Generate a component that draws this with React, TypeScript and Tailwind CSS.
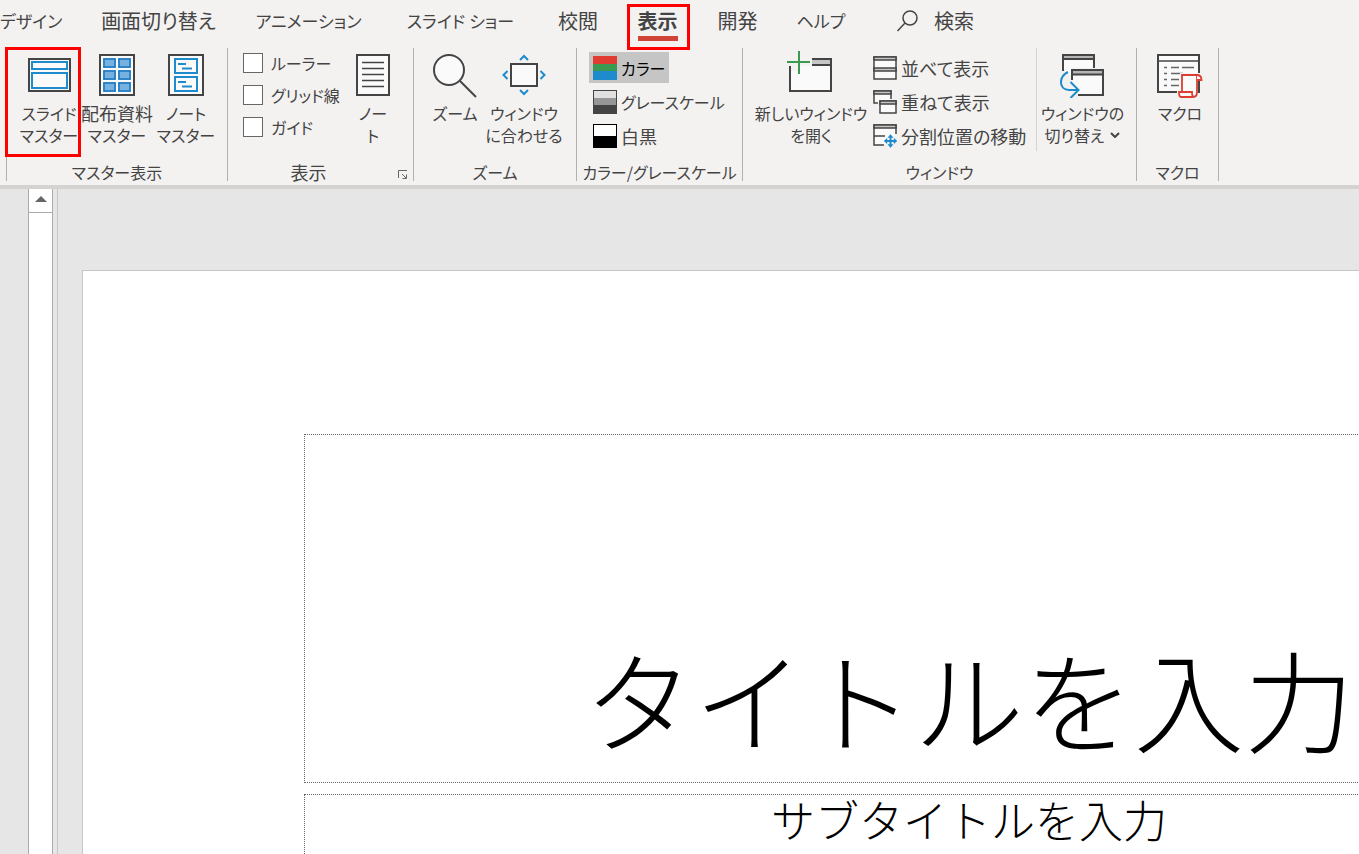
import React from "react";

const INK = "#444444";
const BLUE = "#1e8bcd";

// Kana-heavy captions are set a step smaller than kanji ones.
function captionSize(text: string) {
  const kana = text.match(/[\u3040-\u30ff]/g)?.length ?? 0;
  return kana / text.length >= 0.5 ? "text-base" : "text-lg";
}

function Tab({ className, kana, children }: { className: string; kana?: boolean; children: React.ReactNode }) {
  return (
    <button
      type="button"
      role="tab"
      className={`flex h-[42px] shrink-0 items-center whitespace-nowrap ${kana ? "text-[17px]" : "text-xl"} ${className}`}
    >
      {children}
    </button>
  );
}

function Group({ label, className, children, launcher }: { label: string; className: string; children: React.ReactNode; launcher?: boolean }) {
  return (
    <section aria-label={label} className={`flex shrink-0 flex-col justify-between border-r border-[#b1b1b1] ${className}`}>
      <div className="flex">{children}</div>
      <div className={`relative flex h-[18px] items-center justify-center whitespace-nowrap ${launcher ? "pr-6" : ""}`}>
        <span className={`${captionSize(label)} leading-4`}>{label}</span>
        {launcher && (
          <button type="button" aria-label="表示の設定" className="absolute right-1 bottom-0">
            <svg width="12" height="12" viewBox="0 0 12 12" fill="none" stroke="#666">
              <path d="M1.500 9V1.500H10M5 5l4 4M9.500 5.500V9.500H5.500" />
            </svg>
          </button>
        )}
      </div>
    </section>
  );
}

function BigButton({ icon, lines, className, menu }: { icon: React.ReactNode; lines: string[]; className: string; menu?: boolean }) {
  return (
    <button type="button" className={`flex shrink-0 flex-col items-center whitespace-nowrap ${className}`}>
      <span className="flex h-[54px] items-center">{icon}</span>
      {lines.map((line, i) => (
        <span key={line} className={`flex h-[22px] items-center gap-1.5 ${captionSize(line)}`}>
          <span className="leading-[22px]">{line}</span>
          {menu && i === lines.length - 1 && (
            <svg width="10" height="6" viewBox="0 0 10 6" fill="none" stroke={INK} strokeWidth="2">
              <path d="M1 1l4 4 4-4" />
            </svg>
          )}
        </span>
      ))}
    </button>
  );
}

function SmallButton({ icon, label, active }: { icon: React.ReactNode; label: string; active?: boolean }) {
  return (
    <button
      type="button"
      aria-pressed={active}
      className={`flex h-[31px] w-max items-center gap-1 whitespace-nowrap px-1 ${captionSize(label)} ${active ? "bg-[#c5c5c5] text-black" : ""}`}
    >
      {icon}
      {label}
    </button>
  );
}

function Check({ label }: { label: string }) {
  return (
    <label className="flex h-5 items-center gap-2 text-base whitespace-nowrap">
      <input type="checkbox" className="size-5 shrink-0 appearance-none border border-[#666] bg-white" />
      {label}
    </label>
  );
}

const SlideMasterIcon = () => (
  <svg width="44" height="44" viewBox="0 0 44 44" fill="#fafafa">
    <path d="M2 6h41v32H2z" stroke={INK} strokeWidth="2" />
    <path d="M5 9h35v7H5zM5 20h35v15H5z" stroke={BLUE} strokeWidth="2" />
  </svg>
);

const HandoutIcon = () => (
  <svg width="36" height="44" viewBox="0 0 36 44" fill="#fafafa">
    <path d="M1 2h34v40H1z" stroke={INK} strokeWidth="2" />
    <path d="M4 5h13v10H4zM19 5h13v10H19zM4 17h13v10H4zM19 17h13v10H19zM4 29h13v10H4zM19 29h13v10H19z" fill="#77b1e0" />
    <path d="M5 6h11v8H5zM20 6h11v8H20zM5 18h11v8H5zM20 18h11v8H20zM5 30h11v8H5zM20 30h11v8H20z" fill="#77b1e0" stroke="#1a76c0" strokeWidth="1.500" />
  </svg>
);

const NotesMasterIcon = () => (
  <svg width="36" height="44" viewBox="0 0 36 44" fill="#fafafa">
    <path d="M1 2h34v40H1z" stroke={INK} strokeWidth="2" />
    <path d="M7 6h22v14H7zM7 24h22v14H7zM10 11h8M14 15.500h10M10 29h8M14 33.500h10" stroke={BLUE} strokeWidth="2" />
  </svg>
);

const NotesIcon = () => (
  <svg width="34" height="44" viewBox="0 0 34 44" fill="#fafafa" stroke={INK}>
    <path d="M1 2h32v40H1z" strokeWidth="2" />
    <path d="M6 9.500h22M6 15.500h22M6 21.500h22M6 27.500h22M6 33.500h22" strokeWidth="1.500" />
  </svg>
);

const ZoomIcon = () => (
  <svg width="44" height="46" viewBox="0 0 44 46" fill="#fafafa" stroke={INK} strokeWidth="2">
    <circle cx="16" cy="18" r="15" />
    <path d="M27 29l16 16" />
  </svg>
);

const FitIcon = () => (
  <svg width="44" height="44" viewBox="0 0 44 44" fill="none" strokeWidth="2">
    <path d="M9 11h26v22H9z" fill="#fafafa" stroke={INK} />
    <path d="M18 7l4-4 4 4M18 37l4 4 4-4M5.500 18l-4 4 4 4M38.500 18l4 4-4 4" stroke={BLUE} />
  </svg>
);

const NewWindowIcon = () => (
  <svg width="48" height="52" viewBox="0 0 48 52" fill="none">
    <path d="M3 18v24h41V10H25v7H13v5H3z" fill="#fafafa" />
    <path d="M25 11h19v5H25z" fill="#c5c5c5" />
    <path d="M3 17v25h41V10H25M25 16h19" stroke={INK} strokeWidth="2" />
    <path d="M12 2v23M0 13h23" stroke="#3a9a52" strokeWidth="2" />
  </svg>
);

const SwitchIcon = () => (
  <svg width="46" height="46" viewBox="2 0 46 46" fill="none">
    <path d="M5 2h32v14H14v9L5 16z" fill="#fafafa" />
    <path d="M5 3h31v4H5zM14 18h31v4H14z" fill="#b5b5b5" />
    <path d="M5 19V3h31v13M5 7h31M14 28V18h31v25H20M14 22.500h31" stroke={INK} strokeWidth="2" />
    <path d="M15 24h29v18H20l-5-6z" fill="#fafafa" />
    <path d="M10 20C0 25 1 38 11 38h9M12.500 30l8 8-8 8" stroke={BLUE} strokeWidth="2" />
  </svg>
);

const MacroIcon = () => (
  <svg width="46" height="46" viewBox="0 0 46 46" fill="#fafafa" strokeWidth="2">
    <path d="M1 3h41v37H1z" stroke={INK} />
    <path d="M1 9h41" stroke={INK} strokeWidth="1.500" />
    <path d="M7 15.500h3M14 15.500h8M25 15.500h12M7 21.500h3M14 21.500h12M7 27.500h3M14 27.500h8M7 33.500h3M14 33.500h8" stroke="#666" strokeWidth="1.500" />
    <path d="M23 21h21v8h-3v17H20v-8h3z" fill="#f3f2f1" />
    <path d="M25 40V23h15v17q0 5-4 5H24q-2 0-2-5h13q0 5 2 5" stroke="#dc3e32" strokeWidth="1.800" />
    <path d="M40 28h4.500q0-5-4.500-5" stroke="#dc3e32" strokeWidth="1.800" />
  </svg>
);

const ColorIcon = () => (
  <svg width="24" height="24" viewBox="0 0 24 24">
    <path d="M0 0h24v8H0z" fill="#e03c31" />
    <path d="M0 8h24v7H0z" fill="#3a9a52" />
    <path d="M0 15h24v9H0z" fill={BLUE} />
  </svg>
);

const GrayIcon = () => (
  <svg width="24" height="24" viewBox="0 0 24 24">
    <path d="M0 0h24v24H0z" fill={INK} />
    <path d="M1 1h22v7H1z" fill="#e1e1e1" />
    <path d="M1 8h22v7H1z" fill="#979797" />
  </svg>
);

const BlackWhiteIcon = () => (
  <svg width="24" height="24" viewBox="0 0 24 24">
    <path d="M0 0h24v24H0z" />
    <path d="M1 1h22v11H1z" fill="#fff" />
  </svg>
);

const ArrangeIcon = () => (
  <svg width="24" height="24" viewBox="0 0 24 24" fill="#fafafa" stroke={INK} strokeWidth="1.500">
    <path d="M1 1h22v22H1z" />
    <path d="M1 1h22v3H1zM1 12h22v3H1z" fill="#c5c5c5" />
  </svg>
);

const CascadeIcon = () => (
  <svg width="24" height="24" viewBox="0 0 24 24" fill="#fafafa" stroke={INK} strokeWidth="1.500">
    <path d="M5 13H1V1h17v8" />
    <path d="M1 1h17v3H1z" fill="#c5c5c5" />
    <path d="M7 11h16v12H7z" />
    <path d="M7 11h16v3H7z" fill="#c5c5c5" />
  </svg>
);

const SplitIcon = () => (
  <svg width="24" height="24" viewBox="0 0 24 24" fill="#fafafa" stroke={INK} strokeWidth="1.500">
    <path d="M11 21H1V1h22v9" />
    <path d="M1 1h22v3H1zM1 12h11" fill="#c5c5c5" />
    <g stroke={BLUE} fill={BLUE} strokeWidth="2">
      <path d="M17.500 12v10M12 17h11" />
      <path d="M17.500 10.500l2.500 3h-5zM17.500 23.500l2.500-3h-5zM11 17l3-2.500v5zM24 17l-3-2.500v5z" strokeWidth="0.500" />
    </g>
  </svg>
);

export default function App() {
  return (
    <div className="relative flex h-screen flex-col overflow-hidden bg-[#e6e6e6] font-['Noto_Sans_CJK_JP',sans-serif] text-[#444]">
      <header className="shrink-0 border-b-4 border-[#d4d3d2] bg-[#f3f2f1]">
        <nav role="tablist" className="flex h-12 [font-feature-settings:'palt']">
          <Tab kana className="w-[82px]">デザイン</Tab>
          <Tab className="w-[153px] justify-center">画面切り替え</Tab>
          <Tab kana className="w-[147px] justify-center">アニメーション</Tab>
          <Tab kana className="w-[157px] justify-center">スライド ショー</Tab>
          <Tab className="w-[78px] justify-center">校閲</Tab>
          <Tab className="w-[81px] justify-center font-bold">
            <span className="relative">
              表示
              <span className="absolute inset-x-0 -bottom-1.5 h-[5px] bg-[#d04437]" />
            </span>
          </Tab>
          <Tab className="w-[79px] justify-center">開発</Tab>
          <Tab kana className="w-[88px] justify-center">ヘルプ</Tab>
          <Tab className="gap-4 pl-8">
            <svg width="21" height="22" viewBox="0 0 21 22" fill="none" stroke={INK} strokeWidth="1.500">
              <circle cx="13" cy="8" r="7" />
              <path d="M8 13l-7.500 8" />
            </svg>
            検索
          </Tab>
        </nav>

        <div className="flex h-[137px] pb-1 pl-[6px] [font-feature-settings:'palt']">
          <Group label="マスター表示" className="w-[222px] border-l">
            <BigButton className="w-[76px] pl-2" icon={<SlideMasterIcon />} lines={["スライド", "マスター"]} />
            <BigButton className="w-[68px]" icon={<HandoutIcon />} lines={["配布資料", "マスター"]} />
            <BigButton className="w-[70px]" icon={<NotesMasterIcon />} lines={["ノート", "マスター"]} />
          </Group>
          <Group label="表示" className="w-[186px]" launcher>
            <div className="flex w-[112px] flex-col gap-3 pt-[5px] pl-[15px]">
              <Check label="ルーラー" />
              <Check label="グリッド線" />
              <Check label="ガイド" />
            </div>
            <BigButton className="w-[66px]" icon={<NotesIcon />} lines={["ノー", "ト"]} />
          </Group>
          <Group label="ズーム" className="w-[163px]">
            <BigButton className="w-[82px]" icon={<ZoomIcon />} lines={["ズーム"]} />
            <BigButton className="w-[56px]" icon={<FitIcon />} lines={["ウィンドウ", "に合わせる"]} />
          </Group>
          <Group label="カラー/グレースケール" className="w-[166px]">
            <div className="flex flex-col gap-[3px] pt-1 pl-3">
              <SmallButton icon={<ColorIcon />} label="カラー" active />
              <SmallButton icon={<GrayIcon />} label="グレースケール" />
              <SmallButton icon={<BlackWhiteIcon />} label="白黒" />
            </div>
          </Group>
          <Group label="ウィンドウ" className="w-[394px]">
            <BigButton className="w-[126px] pl-2.5" icon={<NewWindowIcon />} lines={["新しいウィンドウ", "を開く"]} />
            <div className="flex w-[167px] flex-col gap-[3px] pt-1">
              <SmallButton icon={<ArrangeIcon />} label="並べて表示" />
              <SmallButton icon={<CascadeIcon />} label="重ねて表示" />
              <SmallButton icon={<SplitIcon />} label="分割位置の移動" />
            </div>
            <BigButton className="w-[92px] border-l border-[#d4d3d2]" icon={<SwitchIcon />} lines={["ウィンドウの", "切り替え"]} menu />
          </Group>
          <Group label="マクロ" className="w-[82px]">
            <BigButton className="w-[82px] pl-1" icon={<MacroIcon />} lines={["マクロ"]} />
          </Group>
        </div>
      </header>

      <main className="flex min-h-0 flex-1">
        <div className="flex w-[58px] shrink-0 border-r border-[#c6c6c6] pl-7">
          <div className="flex w-[25px] flex-col border-x border-[#ababab] bg-white">
            <button type="button" aria-label="上へスクロール" className="flex h-6 items-center justify-center border-b border-[#ababab] pb-1">
              <svg width="12" height="6" viewBox="0 0 12 6" fill="#666">
                <path d="M6 0l6 6H0z" />
              </svg>
            </button>
          </div>
        </div>
        <div className="flex min-w-0 flex-1 items-start overflow-hidden pt-[81px] pl-6">
          <article className="w-[1774px] shrink-0 border border-[#c6c6c6] bg-white px-[221px] pt-[163px] text-black">
            <h1 className="flex h-[349px] items-end justify-center border border-dotted border-[#666] pb-5 text-[110px] leading-[130px] font-light whitespace-nowrap">
              タイトルを入力
            </h1>
            <p className="mt-[11px] h-80 border border-dotted border-[#666] text-center text-[44px] leading-[48px] font-light">
              サブタイトルを入力
            </p>
          </article>
        </div>
      </main>

      <div className="pointer-events-none absolute top-[47px] left-[5px] h-[110px] w-[76px] border-3 border-[#f00]" />
      <div className="pointer-events-none absolute top-1 left-[627px] h-[46px] w-[63px] border-3 border-[#f00]" />
    </div>
  );
}
